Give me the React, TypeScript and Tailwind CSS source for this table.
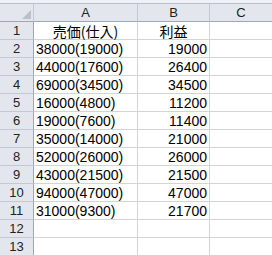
type Row = {
  a: string;
  b: string;
};

const rows: Row[] = [
  { a: "38000(19000)", b: "19000" },
  { a: "44000(17600)", b: "26400" },
  { a: "69000(34500)", b: "34500" },
  { a: "16000(4800)", b: "11200" },
  { a: "19000(7600)", b: "11400" },
  { a: "35000(14000)", b: "21000" },
  { a: "52000(26000)", b: "26000" },
  { a: "43000(21500)", b: "21500" },
  { a: "94000(47000)", b: "47000" },
  { a: "31000(9300)", b: "21700" },
  { a: "", b: "" },
  { a: "", b: "" },
];

const font = { fontFamily: '"Liberation Sans", "Noto Sans CJK JP", sans-serif' };

const headCell =
  "flex h-[18px] shrink-0 items-center justify-center border-r border-b bg-[#e3e7ed] text-[13px] leading-[15px] text-[#222]";

function RowHead({ children }: { children?: React.ReactNode }) {
  return (
    <div className={`${headCell} w-[34px] border-r-[#9ea7b3] border-b-[#c3c9d1]`}>
      {children}
    </div>
  );
}

function ColHead({ children, className }: { children: React.ReactNode; className: string }) {
  return (
    <div className={`${headCell} border-r-[#c3c9d1] border-b-[#9ea7b3] ${className}`}>
      {children}
    </div>
  );
}

export default function App() {
  return (
    <div className="h-[255px] w-[272px] overflow-hidden bg-white text-black" style={font}>
      {/* strip above the column headers */}
      <div className="h-[4px] border-b border-[#b7bfc9] bg-[#eef1f5]" />

      {/* column headers */}
      <div className="flex">
        <div className="relative h-[18px] w-[34px] shrink-0 border-r border-b border-r-[#c3c9d1] border-b-[#9ea7b3] bg-[#e3e7ed]">
          <svg className="absolute right-[2px] bottom-[2px]" width="9" height="9" viewBox="0 0 9 9">
            <polygon points="9,0 9,9 0,9" fill="#b9c0c9" />
          </svg>
        </div>
        <ColHead className="w-[104px]">A</ColHead>
        <ColHead className="w-[72px]">B</ColHead>
        <ColHead className="flex-1 border-r-0">C</ColHead>
      </div>

      {/* title row */}
      <div className="flex">
        <RowHead>1</RowHead>
        <div
          className="flex h-[18px] w-[104px] shrink-0 items-center justify-center border-r border-b border-[#d4d4d4] text-[14px] leading-[16px]"
          style={{ fontFamily: '"Noto Sans CJK JP", sans-serif' }}
        >
          売価(仕入)
        </div>
        <div
          className="flex h-[18px] w-[72px] shrink-0 items-center justify-center border-r border-b border-[#d4d4d4] text-[14px] leading-[16px]"
          style={{ fontFamily: '"Noto Sans CJK JP", sans-serif' }}
        >
          利益
        </div>
        <div className="h-[18px] flex-1 border-b border-[#d4d4d4]" />
      </div>

      {rows.map((row, i) => (
        <div key={i} className="flex">
          <RowHead>{i + 2}</RowHead>
          <div className="flex h-[18px] w-[104px] shrink-0 items-center border-r border-b border-[#d4d4d4] pt-[1px] pl-[2px] text-[14px] leading-[16px]">
            {row.a}
          </div>
          <div className="flex h-[18px] w-[72px] shrink-0 items-center justify-end border-r border-b border-[#d4d4d4] pt-[1px] pr-[2px] text-[14px] leading-[16px]">
            {row.b}
          </div>
          <div className="h-[18px] flex-1 border-b border-[#d4d4d4]" />
        </div>
      ))}
    </div>
  );
}
